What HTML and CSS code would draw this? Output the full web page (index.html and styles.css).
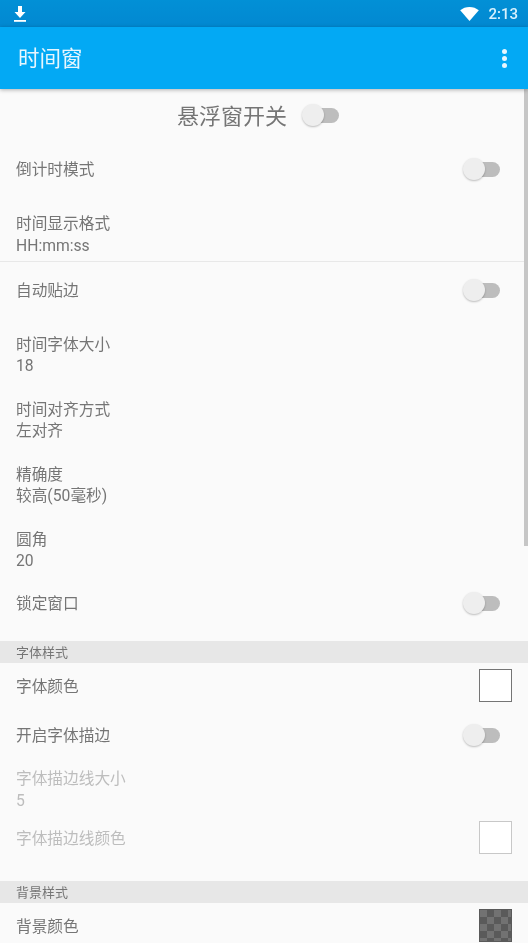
FILE: index.html
```html
<!DOCTYPE html>
<html lang="zh-CN">
<head>
  <meta charset="UTF-8">
  <title>时间窗</title>
  <link rel="stylesheet" href="styles.css">
</head>
<body>
  <div class="phone">
    <div class="status-bar">
      <svg class="status-download" width="14" height="18" viewBox="0 0 14 18">
        <path fill="#fff" d="M5 1h4v6h3.500L7 13 1.500 7H5z"/>
        <rect x="1" y="15" width="12" height="1.800" fill="#fff"/>
      </svg>
      <span class="status-right">
        <svg width="19" height="14" viewBox="0 0 20 15">
          <path fill="#fff" d="M0 3.500C2.800 1.300 6.200 0 10 0s7.200 1.300 10 3.500L10 15z"/>
        </svg>
        <span class="status-time">2:13</span>
      </span>
    </div>

    <header class="app-bar">
      <h1>时间窗</h1>
      <div class="menu-dots"><i></i><i></i><i></i></div>
    </header>

    <main class="content">
      <div class="master-row">
        <span class="master-label">悬浮窗开关</span>
        <span class="switch"></span>
      </div>

      <div class="row row-countdown">
        <span class="label">倒计时模式</span>
        <span class="switch"></span>
      </div>
      <div class="row-two row-format">
        <div class="label">时间显示格式</div>
        <div class="value">HH:mm:ss</div>
      </div>
      <div class="divider"></div>
      <div class="row row-snap">
        <span class="label">自动贴边</span>
        <span class="switch"></span>
      </div>
      <div class="row-two">
        <div class="label">时间字体大小</div>
        <div class="value">18</div>
      </div>
      <div class="row-two">
        <div class="label">时间对齐方式</div>
        <div class="value">左对齐</div>
      </div>
      <div class="row-two">
        <div class="label">精确度</div>
        <div class="value">较高(50毫秒)</div>
      </div>
      <div class="row-two">
        <div class="label">圆角</div>
        <div class="value">20</div>
      </div>
      <div class="row row-lock">
        <span class="label">锁定窗口</span>
        <span class="switch"></span>
      </div>

      <div class="section">字体样式</div>
      <div class="row row-color">
        <span class="label">字体颜色</span>
        <span class="swatch"></span>
      </div>
      <div class="row row-stroke">
        <span class="label">开启字体描边</span>
        <span class="switch"></span>
      </div>
      <div class="row-two row-stroke-size disabled">
        <div class="label">字体描边线大小</div>
        <div class="value">5</div>
      </div>
      <div class="row row-stroke-color disabled">
        <span class="label">字体描边线颜色</span>
        <span class="swatch"></span>
      </div>

      <div class="section">背景样式</div>
      <div class="row row-bg">
        <span class="label">背景颜色</span>
        <span class="swatch swatch-checker"></span>
      </div>
    </main>

    <div class="scrollbar"></div>
  </div>
</body>
</html>
```

FILE: styles.css
```css
* {
  margin: 0;
  padding: 0;
  box-sizing: border-box;
}

html, body {
  height: 100%;
  overflow: hidden;
}

body {
  font-family: Roboto, "Noto Sans CJK SC", sans-serif;
  background: #fafafa;
  color: #757575;
}

.phone {
  position: relative;
  height: 943px;
  overflow: hidden;
  filter: blur(0.5px);
}

/* Status bar */
.status-bar {
  height: 27px;
  background: linear-gradient(#0290d6, #0288d1);
  display: flex;
  justify-content: space-between;
  align-items: center;
  padding: 0 10px 0 13px;
}

.status-right {
  display: flex;
  align-items: center;
  gap: 9px;
}

.status-time {
  color: #d8f1fd;
  font-size: 15px;
  font-weight: 500;
}

/* App bar */
.app-bar {
  position: relative;
  z-index: 1;
  height: 62px;
  background: #03a9f4;
  box-shadow: 0 1px 4px rgba(0, 0, 0, 0.3);
  display: flex;
  justify-content: space-between;
  align-items: center;
  padding: 0 21px 0 18px;
}

.app-bar h1 {
  color: #e6f6fe;
  font-size: 21.500px;
  font-weight: 400;
  margin-bottom: 4px;
}

.menu-dots {
  display: flex;
  flex-direction: column;
  gap: 2px;
}

.menu-dots i {
  width: 5px;
  height: 5px;
  border-radius: 50%;
  background: #e6f6fe;
}

/* Rows */
.master-row {
  height: 54px;
  display: flex;
  justify-content: center;
  align-items: center;
  gap: 15px;
  padding: 0 12px 2px 0;
}

.master-label {
  font-size: 22px;
  margin-bottom: 2px;
}

.row {
  display: flex;
  justify-content: space-between;
  align-items: center;
  padding: 0 16px;
}

.row-two {
  height: 65px;
  padding: 12px 16px 0;
}

.label {
  font-size: 15.700px;
  line-height: 22px;
}

.row-two .label {
  line-height: 21px;
}

.value {
  font-size: 15.700px;
  line-height: 22px;
}

.row .switch {
  margin: 0 12px 2px 0;
}

.row-countdown { height: 54px; }
.row-format { height: 64px; padding-top: 16px; }
.row-format .label { line-height: 22px; }
.row-snap { height: 60px; padding-bottom: 2px; }
.row-lock { height: 59px; padding-bottom: 15px; }
.row-color { height: 47px; }
.row-color .swatch { margin-bottom: 2px; }
.row-stroke { height: 49px; padding-top: 2px; }
.row-stroke-size { height: 61px; padding-top: 9px; }
.row-stroke-size .label { line-height: 22px; }
.row-stroke-color { height: 61px; padding-bottom: 26px; }
.row-stroke-color .label { margin-top: 2px; }
.row-bg { height: 40px; padding-top: 6px; align-items: flex-start; }
.row-bg .label { margin-top: 7px; }

.disabled .label,
.disabled .value {
  color: #bdbdbd;
}

.divider {
  height: 1px;
  background: #e8e8e8;
}

.section {
  height: 22px;
  background: #e7e7e7;
  padding-left: 16px;
  font-size: 13px;
  line-height: 24px;
  overflow: hidden;
}

/* Switch */
.switch {
  position: relative;
  flex: none;
  display: inline-block;
  width: 37px;
  height: 22px;
}

.switch::before {
  content: "";
  position: absolute;
  top: 4px;
  right: 0;
  width: 30px;
  height: 15px;
  border-radius: 8px;
  background: #bdbdbd;
}

.switch::after {
  content: "";
  position: absolute;
  top: 0;
  left: 0;
  width: 22px;
  height: 22px;
  border-radius: 50%;
  background: #eeeeee;
  box-shadow: 0 1px 2px rgba(0, 0, 0, 0.25);
}

/* Color swatches */
.swatch {
  flex: none;
  width: 33px;
  height: 33px;
  background: #fff;
  border: 1px solid #757575;
}

.disabled .swatch {
  border-color: #c8c8c8;
}

.swatch-checker {
  border-color: #5a5a5a;
  background: repeating-conic-gradient(#5a5a5a 0 25%, #727272 0 50%) 0 0 / 14px 14px;
}

/* Overlay scrollbar */
.scrollbar {
  position: absolute;
  top: 89px;
  right: 0;
  width: 4px;
  height: 457px;
  background: #c6c6c6;
}
```
